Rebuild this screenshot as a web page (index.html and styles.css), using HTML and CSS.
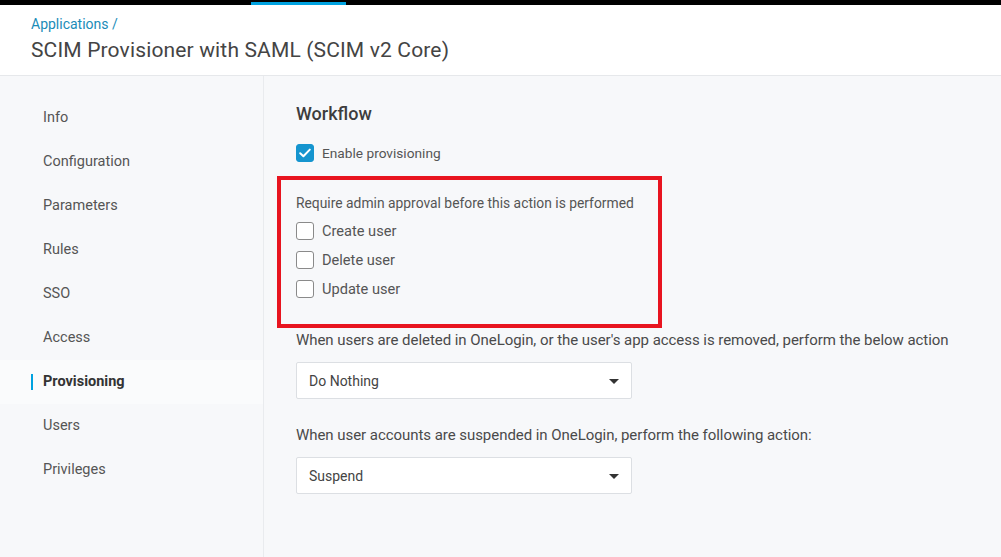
FILE: index.html
```html
<!DOCTYPE html>
<html>
<head>
<meta charset="utf-8">
<link rel="stylesheet" href="styles.css">
</head>
<body>
<div class="topbar"><span class="topbar-active"></span></div>
<header class="header">
  <a class="crumb" href="#">Applications /</a>
  <h1 class="title">SCIM Provisioner with SAML (SCIM v2 Core)</h1>
</header>
<div class="main">
  <nav class="sidebar">
    <div class="nav-item">Info</div>
    <div class="nav-item">Configuration</div>
    <div class="nav-item">Parameters</div>
    <div class="nav-item">Rules</div>
    <div class="nav-item">SSO</div>
    <div class="nav-item">Access</div>
    <div class="nav-item active">Provisioning</div>
    <div class="nav-item">Users</div>
    <div class="nav-item">Privileges</div>
  </nav>
  <section class="content">
    <h2 class="section-title">Workflow</h2>
    <label class="check-row enable">
      <span class="box checked"><svg width="12" height="10" viewBox="0 0 12 10"><path d="M1.2 5.2 L4.4 8.2 L10.8 1.6" fill="none" stroke="#fff" stroke-width="2" stroke-linecap="round" stroke-linejoin="round"/></svg></span>
      <span class="check-label small">Enable provisioning</span>
    </label>
    <div class="highlight">
      <div class="approval-title">Require admin approval before this action is performed</div>
      <label class="check-row"><span class="box"></span><span class="check-label">Create user</span></label>
      <label class="check-row"><span class="box"></span><span class="check-label">Delete user</span></label>
      <label class="check-row"><span class="box"></span><span class="check-label">Update user</span></label>
    </div>
    <div class="field-label first">When users are deleted in OneLogin, or the user's app access is removed, perform the below action</div>
    <div class="select"><span>Do Nothing</span><span class="caret"></span></div>
    <div class="field-label">When user accounts are suspended in OneLogin, perform the following action:</div>
    <div class="select"><span>Suspend</span><span class="caret"></span></div>
  </section>
</div>
</body>
</html>
```
FILE: styles.css
```css
* { box-sizing: border-box; }
html, body { margin: 0; padding: 0; }
body {
  font-family: Roboto, "Liberation Sans", Arial, sans-serif;
  background: #f7f8fa;
  color: #4a4a4a;
  width: 1001px;
  height: 557px;
  overflow: hidden;
}
.topbar {
  height: 5px;
  background: #000;
  position: relative;
}
.topbar-active {
  position: absolute;
  left: 251px;
  top: 2px;
  width: 95px;
  height: 3px;
  background: #00a2e0;
}
.header {
  background: #fff;
  height: 71px;
  border-bottom: 1px solid #e6e8eb;
  padding: 10px 0 0 31px;
}
.crumb {
  display: block;
  color: #1a8cb8;
  font-size: 14px;
  line-height: 18px;
  text-decoration: none;
}
.title {
  margin: 4px 0 0;
  font-size: 21px;
  font-weight: 400;
  line-height: 26px;
  color: #444;
  letter-spacing: 0.15px;
}
.main {
  display: flex;
  height: 481px;
}
.sidebar {
  width: 264px;
  border-right: 1px solid #e9ebee;
  padding-top: 20px;
  flex-shrink: 0;
}
.nav-item {
  height: 44px;
  line-height: 44px;
  padding-left: 43px;
  font-size: 14.5px;
  color: #555;
  position: relative;
}
.nav-item.active {
  font-weight: 700;
  color: #333;
  background: #fafbfc;
}
.nav-item.active::before {
  content: "";
  position: absolute;
  left: 31px;
  top: 14px;
  width: 2px;
  height: 16px;
  background: #00a2e0;
}
.content {
  padding: 27px 0 0 32px;
  flex: 1;
}
.section-title {
  margin: 0;
  font-size: 18px;
  font-weight: 500;
  line-height: 22px;
  color: #3d3d3d;
}
.check-row {
  display: flex;
  align-items: center;
  height: 18px;
}
.check-row.enable { margin-top: 19px; }
.box {
  width: 18px;
  height: 18px;
  border: 1px solid #8a8a8a;
  border-radius: 3px;
  background: #fff;
  display: flex;
  align-items: center;
  justify-content: center;
  flex-shrink: 0;
}
.box.checked {
  background: #1595cf;
  border-color: #1595cf;
}
.check-label {
  margin-left: 8px;
  font-size: 14.6px;
  color: #555;
}
.check-label.small { font-size: 13.7px; }
.highlight {
  width: 385px;
  height: 152px;
  margin: 14px 0 0 -19px;
  border: 4px solid #e8141f;
  padding: 15px 0 0 15px;
}
.approval-title {
  font-size: 13.85px;
  color: #555;
  line-height: 16px;
  margin-bottom: 11px;
}
.highlight .check-row { margin-bottom: 11px; }
.field-label {
  margin: 27px 0 0;
  font-size: 15px;
  line-height: 18px;
  color: #4a4a4a;
  letter-spacing: -0.05px;
}
.field-label.first { margin-top: 3px; }
.select {
  margin: 13px 0 0;
  width: 336px;
  height: 37px;
  background: #fff;
  border: 1px solid #dcdfe3;
  border-radius: 2px;
  display: flex;
  align-items: center;
  justify-content: space-between;
  padding: 0 12px 0 12px;
  font-size: 14px;
  color: #444;
}
.caret {
  width: 0;
  height: 0;
  border-left: 5px solid transparent;
  border-right: 5px solid transparent;
  border-top: 5px solid #333;
  margin-top: 2px;
}
```
